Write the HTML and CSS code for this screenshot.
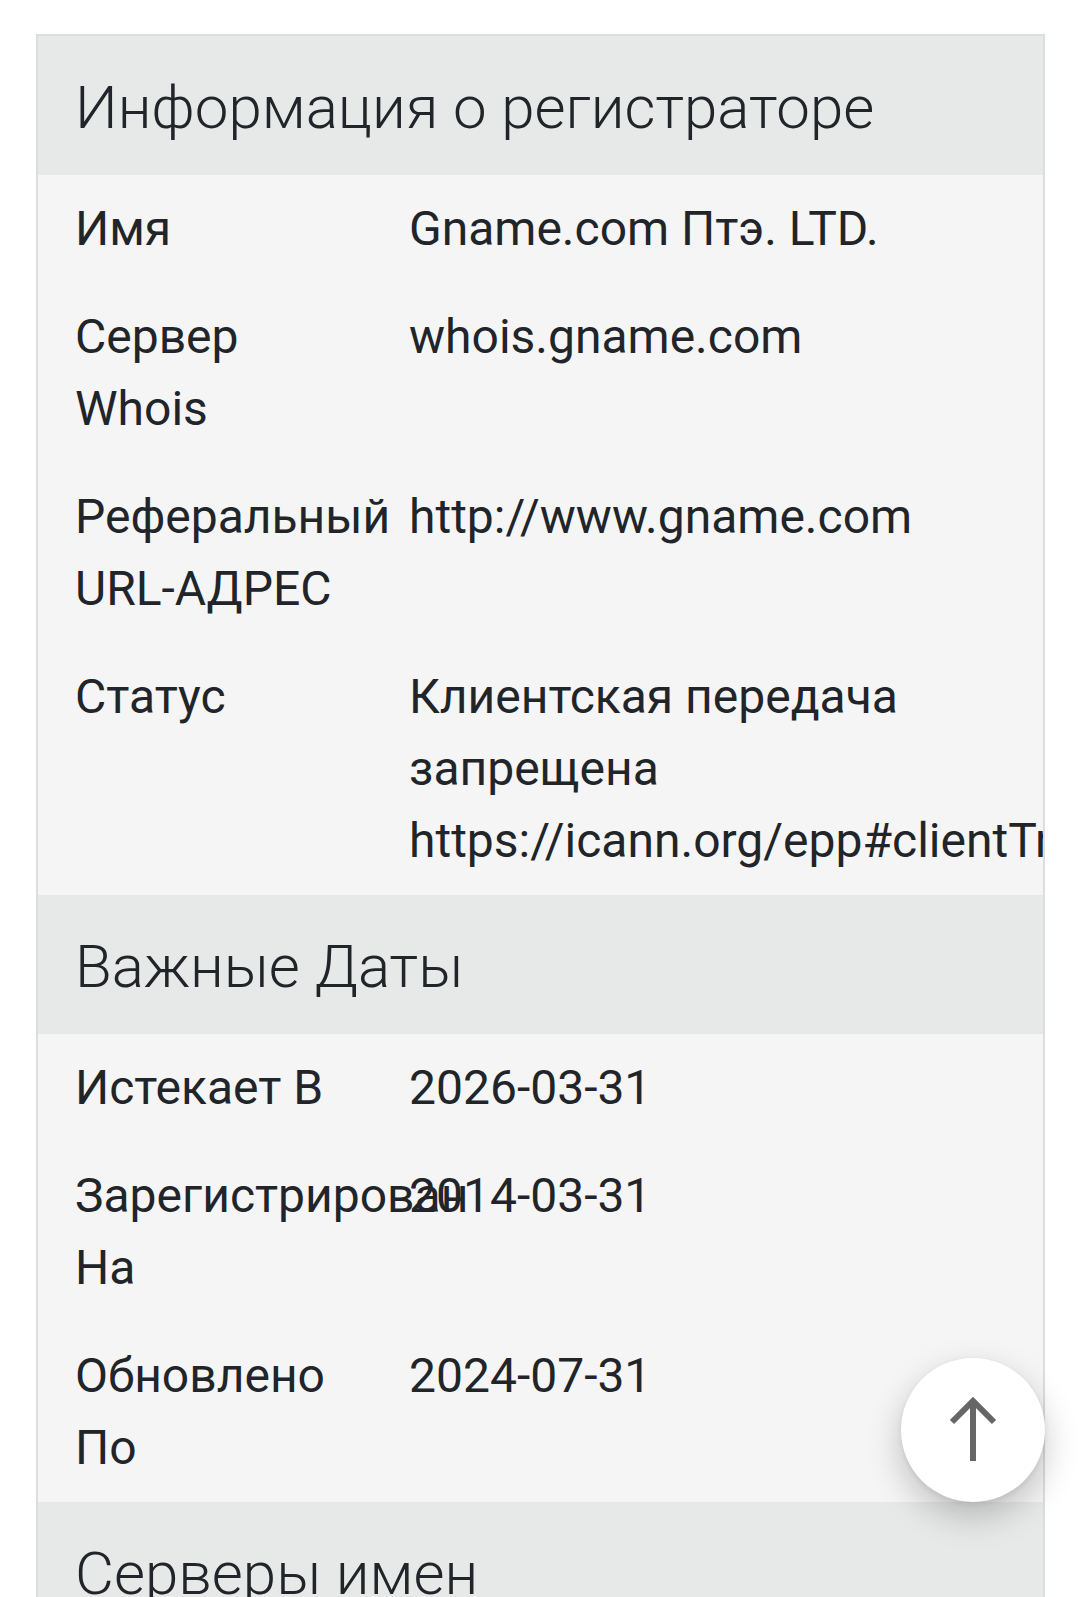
FILE: index.html
```html
<!DOCTYPE html>
<html lang="ru">
<head>
<meta charset="utf-8">
<title>Whois</title>
<link rel="stylesheet" href="styles.css">
</head>
<body>
<div class="card">
  <div class="card-header">Информация о регистраторе</div>
  <div class="card-body">
    <div class="row"><div class="label">Имя</div><div class="value">Gname.com Птэ. LTD.</div></div>
    <div class="row"><div class="label">Сервер Whois</div><div class="value">whois.gname.com</div></div>
    <div class="row"><div class="label">Реферальный URL-АДРЕС</div><div class="value">http://www.gname.com</div></div>
    <div class="row"><div class="label">Статус</div><div class="value">Клиентская передача запрещена https://icann.org/epp#clientTransferProhibited</div></div>
  </div>
  <div class="card-header">Важные Даты</div>
  <div class="card-body">
    <div class="row"><div class="label">Истекает В</div><div class="value">2026-03-31</div></div>
    <div class="row"><div class="label">Зарегистрирован На</div><div class="value">2014-03-31</div></div>
    <div class="row"><div class="label">Обновлено По</div><div class="value">2024-07-31</div></div>
  </div>
  <div class="card-header">Серверы имен</div>
  <div class="card-body">
    <div class="row"><div class="label">Сервер 1</div><div class="value">ns1.gname.net</div></div>
    <div class="row"><div class="label">Сервер 2</div><div class="value">ns2.gname.net</div></div>
  </div>
</div>
<button class="fab" type="button" aria-label="Наверх">
  <svg width="48" height="66" viewBox="0 0 48 66" aria-hidden="true">
    <path d="M24 4 V64" stroke="#666" stroke-width="6" fill="none"/>
    <path d="M3 25 L24 4 L45 25" stroke="#666" stroke-width="6" fill="none" stroke-linejoin="miter"/>
  </svg>
</button>
</body>
</html>
```

FILE: styles.css
```css
html, body {
  margin: 0;
  padding: 0;
  background: #ffffff;
}

body {
  font-family: Roboto, "Noto Sans", "Liberation Sans", sans-serif;
  color: #212529;
  padding: 34px 35px 40px 36px;
}

.card {
  border: 2px solid #dcdddd;
  overflow: hidden;
  background: #f5f5f5;
}

.card-header {
  background: #e7e8e8;
  font-size: 60px;
  font-weight: 300;
  line-height: 139px;
  height: 139px;
  padding: 2px 36px 0 37px;
  box-sizing: border-box;
  white-space: nowrap;
}

.card-body {
  background: #f5f5f5;
}

.row {
  display: grid;
  grid-template-columns: 300px minmax(0, 1fr);
  column-gap: 34px;
  padding: 18px 0 18px 37px;
  font-size: 48px;
  line-height: 72px;
}

.label {
  min-width: 0;
}

.value {
  min-width: 0;
}

.fab {
  position: fixed;
  right: 35px;
  bottom: 95px;
  width: 144px;
  height: 144px;
  border-radius: 50%;
  border: none;
  background: #ffffff;
  box-shadow: 0 14px 34px rgba(0, 0, 0, 0.22), 0 2px 6px rgba(0, 0, 0, 0.08);
  display: flex;
  align-items: center;
  justify-content: center;
  padding: 0;
}

.fab svg {
  display: block;
}
```
